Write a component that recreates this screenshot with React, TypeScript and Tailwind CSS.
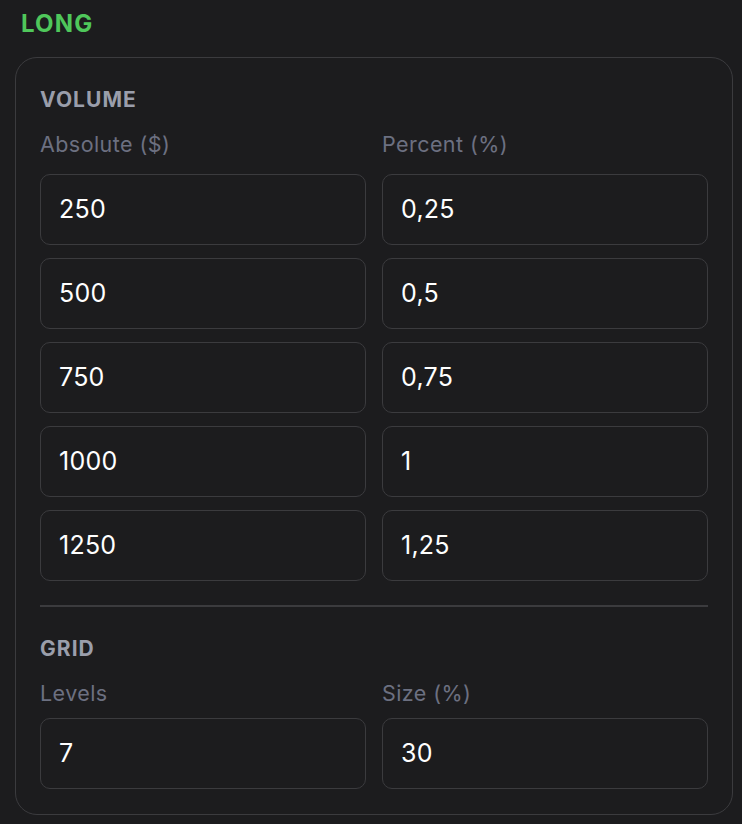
const volume = [
  ["250", "0,25"],
  ["500", "0,5"],
  ["750", "0,75"],
  ["1000", "1"],
  ["1250", "1,25"],
];

function Field({ value }: { value: string }) {
  return (
    <div className="h-[71px] rounded-[10px] border-[1.5px] border-[#3b3b3e] bg-[#1c1c1e] pl-[18px] flex items-center text-[25px] leading-[25px] tracking-[0.01em] text-white">
      {value}
    </div>
  );
}

function Heading({ children, className = "" }: { children: string; className?: string }) {
  return (
    <div className={`h-[21px] text-[21px] leading-[21px] font-bold tracking-[0.05em] text-[#9a9eab] ${className}`}>
      {children}
    </div>
  );
}

function Label({ children }: { children: string }) {
  return <div className="h-[22px] text-[21.5px] leading-[22px] tracking-[0.02em] text-[#6c7081]">{children}</div>;
}

export default function App() {
  return (
    <div
      className="min-h-[824px] bg-[#1c1c1e] pt-[12px] pl-[15px] pr-[9px]"
      style={{ fontFamily: "Inter, 'Noto Sans', sans-serif" }}
    >
      <div className="ml-[6px] h-6 text-[24px] leading-6 font-bold tracking-[0.05em] text-[#4fc75b]">LONG</div>

      <div className="mt-[21px] w-[718px] rounded-[22px] border-[1.5px] border-[#3b3b3e] px-6 pt-[31px] pb-[25px]">
        {/* Volume */}
        <Heading>VOLUME</Heading>
        <div className="mt-[23px] grid grid-cols-2 gap-x-4">
          <Label>Absolute ($)</Label>
          <Label>Percent (%)</Label>
        </div>
        <div className="mt-[19px] grid grid-cols-2 gap-x-4 gap-y-[13px]">
          {volume.map(([abs, pct]) => (
            <>
              <Field key={abs} value={abs} />
              <Field key={pct} value={pct} />
            </>
          ))}
        </div>

        <div className="mt-[24px] h-[1.5px] bg-[#3b3b3e]" />

        {/* Grid */}
        <Heading className="mt-[31px]">GRID</Heading>
        <div className="mt-[23px] grid grid-cols-2 gap-x-4">
          <Label>Levels</Label>
          <Label>Size (%)</Label>
        </div>
        <div className="mt-[14px] grid grid-cols-2 gap-x-4">
          <Field value="7" />
          <Field value="30" />
        </div>
      </div>
    </div>
  );
}
